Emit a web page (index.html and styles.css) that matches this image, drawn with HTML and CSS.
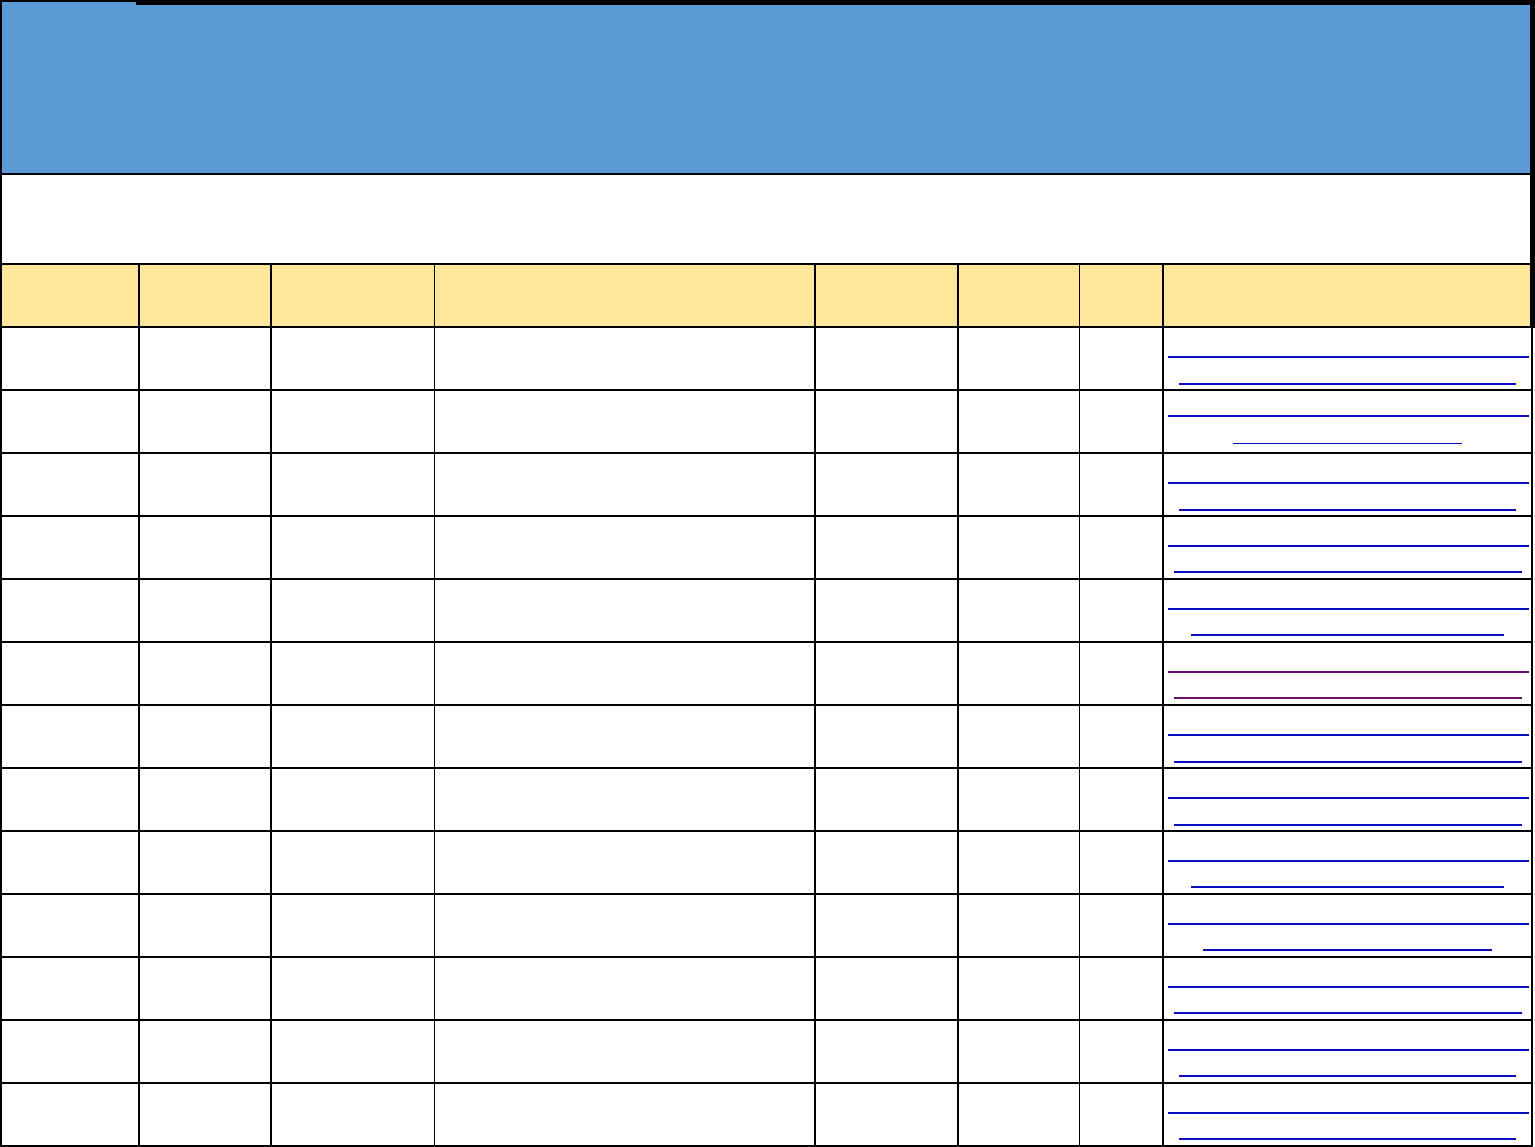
FILE: index.html
```html
<!DOCTYPE html>
<html lang="en">
<head>
<meta charset="utf-8">
<title>Sheet</title>
<link rel="stylesheet" href="styles.css">
</head>
<body>
<div class="sheet">
  <div class="top">
    <div class="title">
      <div class="title-a"></div>
      <div class="title-b"></div>
    </div>
    <div class="subtitle"></div>
    <div class="grid head">
      <div class="c c1"></div><div class="c c2"></div><div class="c c3 thin"></div><div class="c c4"></div>
      <div class="c c5"></div><div class="c c6 thin"></div><div class="c c7"></div><div class="c c8"></div>
    </div>
  </div>
  <div class="rows">
    <div class="grid row"><div class="c"></div><div class="c"></div><div class="c thin"></div><div class="c"></div><div class="c"></div><div class="c thin"></div><div class="c"></div><div class="c link"><a class="ul l1"></a><a class="ul w337"></a></div></div>
    <div class="grid row"><div class="c"></div><div class="c"></div><div class="c thin"></div><div class="c"></div><div class="c"></div><div class="c thin"></div><div class="c"></div><div class="c link up"><a class="ul l1"></a><a class="ul w229 hair"></a></div></div>
    <div class="grid row"><div class="c"></div><div class="c"></div><div class="c thin"></div><div class="c"></div><div class="c"></div><div class="c thin"></div><div class="c"></div><div class="c link"><a class="ul l1"></a><a class="ul w337"></a></div></div>
    <div class="grid row"><div class="c"></div><div class="c"></div><div class="c thin"></div><div class="c"></div><div class="c"></div><div class="c thin"></div><div class="c"></div><div class="c link"><a class="ul l1"></a><a class="ul w348 s1"></a></div></div>
    <div class="grid row"><div class="c"></div><div class="c"></div><div class="c thin"></div><div class="c"></div><div class="c"></div><div class="c thin"></div><div class="c"></div><div class="c link"><a class="ul l1"></a><a class="ul w313 s1"></a></div></div>
    <div class="grid row"><div class="c"></div><div class="c"></div><div class="c thin"></div><div class="c"></div><div class="c"></div><div class="c thin"></div><div class="c"></div><div class="c link visited"><a class="ul l1"></a><a class="ul w348 s1"></a></div></div>
    <div class="grid row"><div class="c"></div><div class="c"></div><div class="c thin"></div><div class="c"></div><div class="c"></div><div class="c thin"></div><div class="c"></div><div class="c link"><a class="ul l1"></a><a class="ul w348"></a></div></div>
    <div class="grid row"><div class="c"></div><div class="c"></div><div class="c thin"></div><div class="c"></div><div class="c"></div><div class="c thin"></div><div class="c"></div><div class="c link"><a class="ul l1"></a><a class="ul w348"></a></div></div>
    <div class="grid row"><div class="c"></div><div class="c"></div><div class="c thin"></div><div class="c"></div><div class="c"></div><div class="c thin"></div><div class="c"></div><div class="c link"><a class="ul l1"></a><a class="ul w313 s1"></a></div></div>
    <div class="grid row"><div class="c"></div><div class="c"></div><div class="c thin"></div><div class="c"></div><div class="c"></div><div class="c thin"></div><div class="c"></div><div class="c link"><a class="ul l1"></a><a class="ul w289 s1"></a></div></div>
    <div class="grid row"><div class="c"></div><div class="c"></div><div class="c thin"></div><div class="c"></div><div class="c"></div><div class="c thin"></div><div class="c"></div><div class="c link"><a class="ul l1"></a><a class="ul w348 s1"></a></div></div>
    <div class="grid row"><div class="c"></div><div class="c"></div><div class="c thin"></div><div class="c"></div><div class="c"></div><div class="c thin"></div><div class="c"></div><div class="c link"><a class="ul l1"></a><a class="ul w337 s1"></a></div></div>
    <div class="grid row"><div class="c"></div><div class="c"></div><div class="c thin"></div><div class="c"></div><div class="c"></div><div class="c thin"></div><div class="c"></div><div class="c link"><a class="ul l1"></a><a class="ul w337 s1"></a></div></div>
  </div>
</div>
</body>
</html>
```

FILE: styles.css
```css
* { box-sizing: border-box; }
html, body { margin: 0; padding: 0; background: #ffffff; }
body { font-family: "Liberation Sans", Arial, sans-serif; font-size: 15px; }

.sheet { width: 1535px; }

.top {
  width: 1535px;
  border-left: 2px solid #000;
  border-right: 5px solid #000;
}

.title {
  display: flex;
  height: 175px;
  border-bottom: 2px solid #000;
}
.title-a {
  width: 134px;
  border-top: 2px solid #000;
  background: #5b9bd5;
}
.title-b {
  flex: 1;
  border-top: 5px solid #000;
  background: #5b9bd5;
}

.subtitle {
  height: 90px;
  border-bottom: 2px solid #000;
  background: #ffffff;
}

.grid {
  display: grid;
  grid-template-columns: 138px 132px 163px 381px 143px 121px 84px 1fr;
}

.head {
  height: 63px;
  border-bottom: 2px solid #000;
  background: #ffe699;
}

.c {
  border-right: 2px solid #000;
  min-width: 0;
}
.c.thin { border-right-width: 1px; }
.grid > .c:last-child { border-right: 0; }

.rows {
  width: 1533px;
  border-left: 2px solid #000;
  border-right: 2px solid #000;
}

.row {
  height: 63px;
  border-bottom: 2px solid #000;
}

.link {
  display: flex;
  flex-direction: column;
  align-items: center;
  padding-top: 28px;
  gap: 25px;
}
.link.up { padding-top: 24px; }

.ul {
  display: block;
  height: 2px;
  background: #0c0cc2;
  text-decoration: none;
}
.visited .ul { background: #6a106c; }
.ul.hair { height: 1px; margin-top: 1px; }

.ul.l1 { width: 361px; margin-left: 2px; }
.ul.w337 { width: 337px; }
.ul.w229 { width: 229px; }
.ul.w348 { width: 348px; }
.ul.w313 { width: 313px; }
.ul.w289 { width: 289px; }
.ul.s1 { margin-top: -1px; }
```
